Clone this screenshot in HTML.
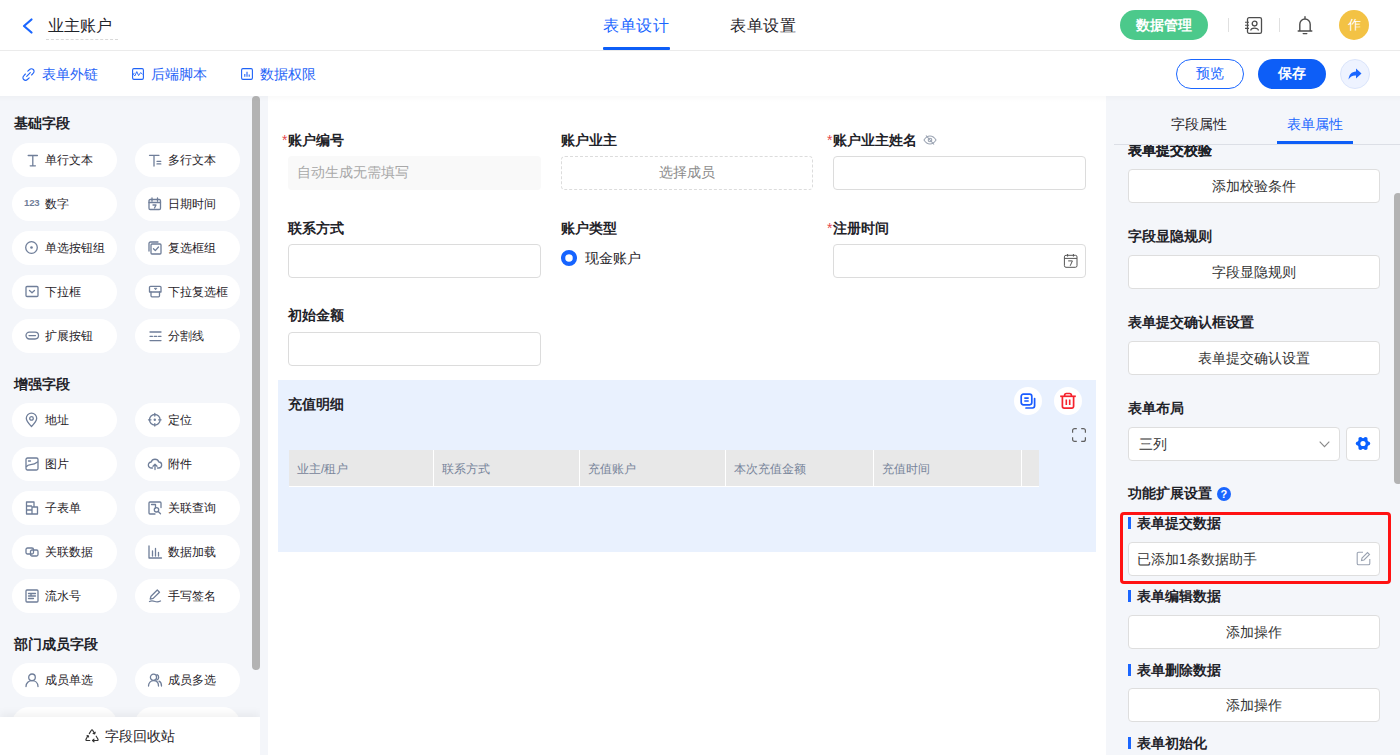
<!DOCTYPE html>
<html><head><meta charset="utf-8">
<style>
*{box-sizing:border-box;margin:0;padding:0}
html,body{width:1400px;height:755px;overflow:hidden;background:#fff;font-family:"Liberation Sans",sans-serif;color:#1f2329}
.a{position:absolute}
.t{position:absolute;white-space:nowrap;line-height:1}
svg{position:absolute;overflow:visible}
/* header */
#hdr{position:absolute;left:0;top:0;width:1400px;height:51px;background:#fff;border-bottom:1px solid #ebebeb}
#tb{position:absolute;left:0;top:51px;width:1400px;height:44px;background:#fff}
.link{color:#1f63f7;font-size:14px}
/* left */
#left{position:absolute;left:0;top:95px;width:260px;height:660px;background:#f4f6fa;overflow:hidden}
.sec{position:absolute;left:14px;font-size:14px;font-weight:bold;color:#1f2329;line-height:1}
.pill{position:absolute;width:105px;height:34px;border-radius:17px;background:#fff}
.pill span{position:absolute;left:33px;top:11px;font-size:12px;line-height:1;color:#1f2329;white-space:nowrap}
.pill svg{left:13px;top:10px}
#canvas{position:absolute;left:260px;top:95px;width:846px;height:660px;background:#f4f6fa}
#form{position:absolute;left:268px;top:95px;width:838px;height:660px;background:#fff}
#right{position:absolute;left:1106px;top:95px;width:294px;height:660px;background:#f4f6fa;overflow:hidden}
.shadow{position:absolute;left:0;top:96px;width:1400px;height:6px;background:linear-gradient(rgba(0,0,0,0.025),rgba(0,0,0,0))}
.lbl{font-size:14px;font-weight:bold;color:#1f2329}
.inp{height:34px;border:1px solid #dcdcdc;border-radius:4px;background:#fff}
</style></head><body>
<div id="hdr">
  <svg style="left:22px;top:17.5px" width="11" height="16" viewBox="0 0 11 16"><path d="M9.5 1.5 L2 8 L9.5 14.5" fill="none" stroke="#1a66ff" stroke-width="2.2" stroke-linecap="round" stroke-linejoin="round"/></svg>
  <div class="t" style="left:48px;top:18px;font-size:16px;color:#1f2329">业主账户</div>
  <div class="a" style="left:46px;top:39px;width:72px;border-top:1px dashed #d9d9d9"></div>
  <div class="t" style="left:603px;top:18px;font-size:16px;letter-spacing:0.6px;color:#1a66ff">表单设计</div>
  <div class="a" style="left:603px;top:47px;width:67px;height:3px;background:#0d5ef7;border-radius:1px"></div>
  <div class="t" style="left:730px;top:18px;font-size:16px;letter-spacing:0.6px;color:#1f2329">表单设置</div>
  <div class="a" style="left:1120px;top:10px;width:88px;height:30px;border-radius:15px;background:#4cc98b"></div>
  <div class="t" style="left:1136px;top:18px;font-size:14px;color:#fff;font-weight:bold">数据管理</div>
  <div class="a" style="left:1228px;top:18px;width:1px;height:14px;background:#e0e0e0"></div>
  <div class="a" style="left:1279px;top:18px;width:1px;height:14px;background:#e0e0e0"></div>
  <svg style="left:1244px;top:16px" width="19" height="19" viewBox="0 0 19 19"><rect x="3.5" y="1.7" width="14" height="15.6" rx="1.6" fill="none" stroke="#4d4d4d" stroke-width="1.3"/><circle cx="10.6" cy="7.6" r="2.4" fill="none" stroke="#4d4d4d" stroke-width="1.3"/><path d="M6.8 14.6C6.8 11.2 14.4 11.2 14.4 14.6" fill="none" stroke="#4d4d4d" stroke-width="1.3"/><path d="M1 6.2h4M1 9.3h4M1 12.4h4" stroke="#4d4d4d" stroke-width="1.1"/></svg>
  <svg style="left:1297px;top:16px" width="16" height="19" viewBox="0 0 16 19"><path d="M8 0.8v1.6M2.8 14.8V8.2a5.2 5.2 0 0 1 10.4 0v6.6M1.2 15h13.6M6.2 17.6h3.6" fill="none" stroke="#4d4d4d" stroke-width="1.4" stroke-linecap="round"/></svg>
  <div class="a" style="left:1339px;top:10px;width:30px;height:30px;border-radius:15px;background:#f3c244"></div>
  <div class="t" style="left:1348px;top:19px;font-size:12.5px;color:#fff">作</div>
</div>
<div id="tb">
  <svg style="left:22px;top:17px" width="13" height="13" viewBox="0 0 13 13"><path d="M5.8 3.2L7.6 1.5a2.6 2.6 0 0 1 3.7 3.7L9.6 7M7.2 9.8L5.4 11.5a2.6 2.6 0 0 1 -3.7 -3.7L3.4 6M4.7 8.3L8.3 4.7" fill="none" stroke="#1f63f7" stroke-width="1.1" stroke-linecap="round"/></svg>
  <div class="t link" style="left:42px;top:16px">表单外链</div>
  <svg style="left:132px;top:17px" width="12" height="12" viewBox="0 0 12 12"><rect x="0.6" y="0.6" width="10.8" height="10.8" rx="1.3" fill="none" stroke="#1f63f7" stroke-width="1.1"/><path d="M2.6 4.8L1.2 6.3L2.9 7.9L4.8 3.6L6.6 7.6L8.6 4.6L10.6 6.3" fill="none" stroke="#1f63f7" stroke-width="0.9" stroke-linejoin="round"/></svg>
  <div class="t link" style="left:151px;top:16px">后端脚本</div>
  <svg style="left:241px;top:17px" width="12" height="12" viewBox="0 0 12 12"><rect x="0.6" y="0.6" width="10.8" height="10.8" rx="1.3" fill="none" stroke="#1f63f7" stroke-width="1.1"/><path d="M3.8 8.8V6M6 8.8V3.8M8.2 8.8V6.5" fill="none" stroke="#1f63f7" stroke-width="1.1"/></svg>
  <div class="t link" style="left:260px;top:16px">数据权限</div>
  <div class="a" style="left:1176px;top:8px;width:68px;height:30px;border-radius:15px;border:1px solid #1a66ff;background:#fff"></div>
  <div class="t" style="left:1196px;top:15px;font-size:14px;color:#1a66ff">预览</div>
  <div class="a" style="left:1258px;top:8px;width:68px;height:30px;border-radius:15px;background:#0d5ef7"></div>
  <div class="t" style="left:1278px;top:15px;font-size:14px;color:#fff;font-weight:bold">保存</div>
  <div class="a" style="left:1340px;top:8px;width:30px;height:30px;border-radius:15px;background:#eef3ff;border:1px solid #dbe5fb"></div>
  <svg style="left:1347px;top:15px" width="16" height="16" viewBox="0 0 16 16"><path d="M9 2.5 L14.5 7.5 L9 12.5 V9.5 C5.5 9.3 3.3 10.5 1.5 13.5 C2 8.5 4.5 5.8 9 5.5 Z" fill="#1a66ff"/></svg>
</div>
<div id="canvas"></div>
<div id="form"></div>
<div class="t" style="left:282px;top:133px;font-size:14px;color:#e5484d">*</div><div class="t lbl" style="left:288px;top:133px">账户编号</div>
<div class="a" style="left:288px;top:156px;width:253px;height:34px;border-radius:4px;background:#f9f9f9"></div>
<div class="t" style="left:297px;top:165px;font-size:14px;color:#a8a8a8">自动生成无需填写</div>
<div class="t lbl" style="left:561px;top:133px">账户业主</div>
<div class="a" style="left:561px;top:156px;width:252px;height:34px;border-radius:4px;border:1px dashed #dcdcdc;background:#fff"></div>
<div class="t" style="left:659px;top:165px;font-size:14px;color:#8c8c8c">选择成员</div>
<div class="t" style="left:827px;top:133px;font-size:14px;color:#e5484d">*</div><div class="t lbl" style="left:833px;top:133px">账户业主姓名</div>
<svg style="left:923px;top:134px" width="14" height="12" viewBox="0 0 14 12"><path d="M1 6c1.6-2.6 3.6-4 6-4s4.4 1.4 6 4c-1.6 2.6-3.6 4-6 4S2.6 8.6 1 6z" fill="none" stroke="#9aa3b2" stroke-width="1.1"/><circle cx="7" cy="6" r="1.8" fill="none" stroke="#9aa3b2" stroke-width="1.1"/><path d="M3 1.5l8 9" stroke="#9aa3b2" stroke-width="1.1"/></svg>
<div class="a inp" style="left:833px;top:156px;width:253px"></div>
<div class="t lbl" style="left:288px;top:221px">联系方式</div>
<div class="a inp" style="left:288px;top:244px;width:253px"></div>
<div class="t lbl" style="left:561px;top:221px">账户类型</div>
<svg style="left:561px;top:250px" width="16" height="16" viewBox="0 0 16 16"><circle cx="8" cy="8" r="5.9" fill="#fff" stroke="#1664ff" stroke-width="4.3"/></svg>
<div class="t" style="left:585px;top:251px;font-size:14px;color:#1f2329">现金账户</div>
<div class="t" style="left:827px;top:221px;font-size:14px;color:#e5484d">*</div><div class="t lbl" style="left:833px;top:221px">注册时间</div>
<div class="a inp" style="left:833px;top:244px;width:253px"></div>
<svg style="left:1063px;top:253px" width="15" height="15" viewBox="0 0 15 15"><rect x="1.4" y="2.3" width="12.6" height="12" rx="1.6" fill="none" stroke="#555" stroke-width="1"/><path d="M1.4 5.4h12.6M4.6 1v2.6M10.4 1v2.6M5.2 7.9h4.2L7.2 12.8" fill="none" stroke="#555" stroke-width="1"/></svg>
<div class="t lbl" style="left:288px;top:308px">初始金额</div>
<div class="a inp" style="left:288px;top:332px;width:253px"></div>
<div class="a" style="left:278px;top:380px;width:818px;height:172px;background:#e9f1fe"></div>
<div class="t lbl" style="left:288px;top:397px">充值明细</div>
<div class="a" style="left:1014px;top:387px;width:28px;height:28px;border-radius:14px;background:#fff"></div>
<svg style="left:1019px;top:392px" width="18" height="18" viewBox="0 0 18 18"><rect x="2.2" y="2.2" width="10.6" height="10.6" rx="2.2" fill="none" stroke="#1a5cff" stroke-width="1.7"/><path d="M5.3 6.2h4.4M5.3 9h4.4" stroke="#1a5cff" stroke-width="1.7"/><path d="M15.6 6.5v7.3a2.2 2.2 0 0 1-2.2 2.2H7" fill="none" stroke="#1a5cff" stroke-width="1.7" stroke-linecap="round"/></svg>
<div class="a" style="left:1054px;top:387px;width:28px;height:28px;border-radius:14px;background:#fff"></div>
<svg style="left:1059px;top:392px" width="18" height="18" viewBox="0 0 18 18"><path d="M1.2 4.3h15.6" stroke="#f5222d" stroke-width="1.7"/><path d="M5.6 4.3V3.3a1.8 1.8 0 0 1 1.8-1.8h3.2a1.8 1.8 0 0 1 1.8 1.8v1" fill="none" stroke="#f5222d" stroke-width="1.7"/><path d="M3.4 4.3v10a1.8 1.8 0 0 0 1.8 1.8h7.6a1.8 1.8 0 0 0 1.8-1.8v-10" fill="none" stroke="#f5222d" stroke-width="1.7"/><path d="M7.3 7.5v5.5M10.7 7.5v5.5" stroke="#f5222d" stroke-width="1.6"/></svg>
<svg style="left:1072px;top:428px" width="14" height="14" viewBox="0 0 14 14"><path d="M0.6 4.8V2.6a2 2 0 0 1 2-2h2.2M9.2 0.6h2.2a2 2 0 0 1 2 2v2.2M13.4 9.2v2.2a2 2 0 0 1-2 2H9.2M4.8 13.4H2.6a2 2 0 0 1-2-2V9.2" fill="none" stroke="#606060" stroke-width="1.2"/></svg>
<div class="a" style="left:289px;top:450px;width:750px;height:37px;background:#fff"></div>
<div class="a" style="left:289px;top:450px;width:144px;height:36px;background:#e8e8e8"></div>
<div class="t" style="left:297px;top:463px;font-size:12px;color:#77849a">业主/租户</div>
<div class="a" style="left:434px;top:450px;width:145px;height:36px;background:#e8e8e8"></div>
<div class="t" style="left:442px;top:463px;font-size:12px;color:#77849a">联系方式</div>
<div class="a" style="left:580px;top:450px;width:145px;height:36px;background:#e8e8e8"></div>
<div class="t" style="left:588px;top:463px;font-size:12px;color:#77849a">充值账户</div>
<div class="a" style="left:726px;top:450px;width:147px;height:36px;background:#e8e8e8"></div>
<div class="t" style="left:734px;top:463px;font-size:12px;color:#77849a">本次充值金额</div>
<div class="a" style="left:874px;top:450px;width:147px;height:36px;background:#e8e8e8"></div>
<div class="t" style="left:882px;top:463px;font-size:12px;color:#77849a">充值时间</div>
<div class="a" style="left:1022px;top:450px;width:17px;height:36px;background:#e8e8e8"></div>
<div id="left">
<div class="sec" style="top:21px">基础字段</div>
<div class="pill" style="left:12px;top:48px"><svg width="14" height="14" viewBox="0 0 14 14"><path d="M3.2 2.5h9.2M5.2 12.8h5.2M7.8 2.5v10.3" fill="none" stroke="#6f7e99" stroke-width="1.3" stroke-linecap="round" stroke-linejoin="round"/></svg><span>单行文本</span></div>
<div class="pill" style="left:135px;top:48px"><svg width="14" height="14" viewBox="0 0 14 14"><path d="M1.5 2.3h9.5M6 2.3v10.8M9 8.3h3.8M9 10.9h3.8" fill="none" stroke="#6f7e99" stroke-width="1.3" stroke-linecap="round" stroke-linejoin="round"/></svg><span>多行文本</span></div>
<div class="pill" style="left:12px;top:92px"><svg width="14" height="14" viewBox="0 0 14 14"><text x="-1" y="9" font-family="Liberation Sans" font-weight="bold" font-size="9.6" letter-spacing="-0.2" fill="#6f7e99">123</text></svg><span>数字</span></div>
<div class="pill" style="left:135px;top:92px"><svg width="14" height="14" viewBox="0 0 14 14"><rect x="1" y="2.5" width="11.5" height="10" rx="1.2" fill="none" stroke="#6f7e99" stroke-width="1.3" stroke-linecap="round" stroke-linejoin="round"/><path d="M1 5.5h11.5M4 1v3M9.5 1v3M5 8h3l-1.5 3" fill="none" stroke="#6f7e99" stroke-width="1.3" stroke-linecap="round" stroke-linejoin="round"/></svg><span>日期时间</span></div>
<div class="pill" style="left:12px;top:136px"><svg width="14" height="14" viewBox="0 0 14 14"><circle cx="6.5" cy="6.5" r="5.8" fill="none" stroke="#6f7e99" stroke-width="1.3" stroke-linecap="round" stroke-linejoin="round"/><circle cx="6.5" cy="6.5" r="1.3" fill="#6f7e99"/></svg><span>单选按钮组</span></div>
<div class="pill" style="left:135px;top:136px"><svg width="14" height="14" viewBox="0 0 14 14"><path d="M1 10V2.5a1.5 1.5 0 0 1 1.5-1.5H10" fill="none" stroke="#6f7e99" stroke-width="1.3" stroke-linecap="round" stroke-linejoin="round"/><rect x="3" y="3" width="10" height="10" rx="1" fill="none" stroke="#6f7e99" stroke-width="1.3" stroke-linecap="round" stroke-linejoin="round"/><path d="M5.5 7.8l1.8 1.8 3.2-3.6" fill="none" stroke="#6f7e99" stroke-width="1.3" stroke-linecap="round" stroke-linejoin="round"/></svg><span>复选框组</span></div>
<div class="pill" style="left:12px;top:180px"><svg width="14" height="14" viewBox="0 0 14 14"><rect x="1" y="1.5" width="12" height="10" rx="1" fill="none" stroke="#6f7e99" stroke-width="1.3" stroke-linecap="round" stroke-linejoin="round"/><path d="M4.5 5.5l2.5 2.3 2.5-2.3" fill="none" stroke="#6f7e99" stroke-width="1.3" stroke-linecap="round" stroke-linejoin="round"/></svg><span>下拉框</span></div>
<div class="pill" style="left:135px;top:180px"><svg width="14" height="14" viewBox="0 0 14 14"><path d="M2.5 1.3h9.5a1 1 0 0 1 1 1V7H1.5V2.3a1 1 0 0 1 1-1z" fill="none" stroke="#6f7e99" stroke-width="1.3" stroke-linecap="round" stroke-linejoin="round"/><path d="M3 7v3.8a1 1 0 0 0 1 1h6.5a1 1 0 0 0 1-1V7" fill="none" stroke="#6f7e99" stroke-width="1.3" stroke-linecap="round" stroke-linejoin="round"/><path d="M6.3 3.3h2.6L7.6 4.8z" fill="#6f7e99" stroke="#6f7e99" stroke-width="0.8" stroke-linejoin="round"/></svg><span>下拉复选框</span></div>
<div class="pill" style="left:12px;top:224px"><svg width="14" height="14" viewBox="0 0 14 14"><rect x="1" y="3.2" width="12.5" height="6.8" rx="3.4" fill="none" stroke="#6f7e99" stroke-width="1.3" stroke-linecap="round" stroke-linejoin="round"/><path d="M4 6.6h6.5" fill="none" stroke="#6f7e99" stroke-width="1.3" stroke-linecap="round" stroke-linejoin="round"/></svg><span>扩展按钮</span></div>
<div class="pill" style="left:135px;top:224px"><svg width="14" height="14" viewBox="0 0 14 14"><path d="M2 3h11M2 7.3h2.5M6.2 7.3h2.6M10.5 7.3h2.5M2 11.6h11" fill="none" stroke="#6f7e99" stroke-width="1.3" stroke-linecap="round" stroke-linejoin="round"/></svg><span>分割线</span></div>
<div class="sec" style="top:282px">增强字段</div>
<div class="pill" style="left:12px;top:308px"><svg width="14" height="14" viewBox="0 0 14 14"><path d="M6.5 13.5C3 10 1.3 7.5 1.3 5.3a5.2 5.2 0 0 1 10.4 0c0 2.2-1.7 4.7-5.2 8.2z" fill="none" stroke="#6f7e99" stroke-width="1.3" stroke-linecap="round" stroke-linejoin="round"/><circle cx="6.5" cy="5.4" r="1.8" fill="none" stroke="#6f7e99" stroke-width="1.3" stroke-linecap="round" stroke-linejoin="round"/></svg><span>地址</span></div>
<div class="pill" style="left:135px;top:308px"><svg width="14" height="14" viewBox="0 0 14 14"><circle cx="6.8" cy="6.8" r="5.3" fill="none" stroke="#6f7e99" stroke-width="1.3" stroke-linecap="round" stroke-linejoin="round"/><circle cx="6.8" cy="6.8" r="1.2" fill="#6f7e99"/><path d="M6.8 0.5v2.5M6.8 10.6v2.5M0.5 6.8h2.5M10.6 6.8h2.5" fill="none" stroke="#6f7e99" stroke-width="1.3" stroke-linecap="round" stroke-linejoin="round"/></svg><span>定位</span></div>
<div class="pill" style="left:12px;top:352px"><svg width="14" height="14" viewBox="0 0 14 14"><rect x="1" y="1" width="12" height="12" rx="1.5" fill="none" stroke="#6f7e99" stroke-width="1.3" stroke-linecap="round" stroke-linejoin="round"/><path d="M1.5 9.5C4 6 7 9.5 12.5 5M3.5 4h2" fill="none" stroke="#6f7e99" stroke-width="1.3" stroke-linecap="round" stroke-linejoin="round"/></svg><span>图片</span></div>
<div class="pill" style="left:135px;top:352px"><svg width="14" height="14" viewBox="0 0 14 14"><path d="M4.5 11H3.5a3 3 0 0 1-.3-6 4 4 0 0 1 7.6 0 3 3 0 0 1-.3 6H9.5" fill="none" stroke="#6f7e99" stroke-width="1.3" stroke-linecap="round" stroke-linejoin="round"/><path d="M7 12.5V7.5M5 9.3l2-2 2 2" fill="none" stroke="#6f7e99" stroke-width="1.3" stroke-linecap="round" stroke-linejoin="round"/></svg><span>附件</span></div>
<div class="pill" style="left:12px;top:396px"><svg width="14" height="14" viewBox="0 0 14 14"><path d="M7 13H1.5V1h7.5v4.5M1.5 5h5M1.5 9h5M7 6h5.5v7H7z" fill="none" stroke="#6f7e99" stroke-width="1.3" stroke-linecap="round" stroke-linejoin="round"/></svg><span>子表单</span></div>
<div class="pill" style="left:135px;top:396px"><svg width="14" height="14" viewBox="0 0 14 14"><path d="M7 13H2a1 1 0 0 1-1-1V2a1 1 0 0 1 1-1h10a1 1 0 0 1 1 1v4.5" fill="none" stroke="#6f7e99" stroke-width="1.3" stroke-linecap="round" stroke-linejoin="round"/><path d="M3.5 3.5h4v3.5" fill="none" stroke="#6f7e99" stroke-width="1.3" stroke-linecap="round" stroke-linejoin="round"/><circle cx="8.5" cy="8.8" r="2.2" fill="none" stroke="#6f7e99" stroke-width="1.3" stroke-linecap="round" stroke-linejoin="round"/><path d="M10.2 10.5l2.3 2.3" fill="none" stroke="#6f7e99" stroke-width="1.3" stroke-linecap="round" stroke-linejoin="round"/></svg><span>关联查询</span></div>
<div class="pill" style="left:12px;top:440px"><svg width="14" height="14" viewBox="0 0 14 14"><rect x="1" y="3" width="7.5" height="6" rx="1.5" fill="none" stroke="#6f7e99" stroke-width="1.3" stroke-linecap="round" stroke-linejoin="round"/><rect x="5.5" y="5" width="7.5" height="6" rx="1.5" fill="none" stroke="#6f7e99" stroke-width="1.3" stroke-linecap="round" stroke-linejoin="round"/></svg><span>关联数据</span></div>
<div class="pill" style="left:135px;top:440px"><svg width="14" height="14" viewBox="0 0 14 14"><path d="M1 1v12h12.5M4.5 11V6M7.5 11V3.5M10.5 11V7.5" fill="none" stroke="#6f7e99" stroke-width="1.3" stroke-linecap="round" stroke-linejoin="round"/></svg><span>数据加载</span></div>
<div class="pill" style="left:12px;top:484px"><svg width="14" height="14" viewBox="0 0 14 14"><rect x="1" y="1" width="12" height="12" rx="1" fill="none" stroke="#6f7e99" stroke-width="1.3" stroke-linecap="round" stroke-linejoin="round"/><path d="M3.5 4.5h7M3.5 7h7M3.5 9.5h5M6 4.5v2.5" fill="none" stroke="#6f7e99" stroke-width="1.3" stroke-linecap="round" stroke-linejoin="round"/></svg><span>流水号</span></div>
<div class="pill" style="left:135px;top:484px"><svg width="14" height="14" viewBox="0 0 14 14"><path d="M1.5 12.5c2-1 4-.5 5.5 0s3.5.5 5.5-.5M2.2 10.2l.8-3 6.3-6.2 2.2 2.2-6.3 6.2z" fill="none" stroke="#6f7e99" stroke-width="1.3" stroke-linecap="round" stroke-linejoin="round"/></svg><span>手写签名</span></div>
<div class="sec" style="top:542px">部门成员字段</div>
<div class="pill" style="left:12px;top:568px"><svg width="14" height="14" viewBox="0 0 14 14"><circle cx="7" cy="4.3" r="3.3" fill="none" stroke="#6f7e99" stroke-width="1.3" stroke-linecap="round" stroke-linejoin="round"/><path d="M1 13.5c0-3.5 2.7-5.8 6-5.8s6 2.3 6 5.8" fill="none" stroke="#6f7e99" stroke-width="1.3" stroke-linecap="round" stroke-linejoin="round"/></svg><span>成员单选</span></div>
<div class="pill" style="left:135px;top:568px"><svg width="14" height="14" viewBox="0 0 14 14"><circle cx="5.5" cy="4.3" r="3.1" fill="none" stroke="#6f7e99" stroke-width="1.3" stroke-linecap="round" stroke-linejoin="round"/><path d="M0.5 13c0-3.3 2.2-5.3 5-5.3s5 2 5 5.3M9 1.6a3 3 0 0 1 0 5.4M11 8.2c1.6.8 2.5 2.5 2.5 4.8" fill="none" stroke="#6f7e99" stroke-width="1.3" stroke-linecap="round" stroke-linejoin="round"/></svg><span>成员多选</span></div>
<div class="pill" style="left:12px;top:612px"><svg width="14" height="14" viewBox="0 0 14 14"></svg><span></span></div>
<div class="pill" style="left:135px;top:612px"><svg width="14" height="14" viewBox="0 0 14 14"></svg><span></span></div>
<div class="a" style="left:252px;top:1px;width:8px;height:574px;border-radius:4px;background:#b3b3b3"></div>
<div class="a" style="left:0;top:622px;width:260px;height:38px;background:#fff;box-shadow:0 -4px 8px rgba(0,0,0,0.05)"></div>
<svg style="left:85px;top:634px" width="14" height="13" viewBox="0 0 14 13"><path d="M4.3 4.6L6.2 1.5Q7 0.3 7.8 1.5L9.6 4.6M8.1 4.5L9.7 4.9L10.2 3.2M3 6.8L1.1 10Q0.4 11.5 2 11.5H4.8M2 6.9L3.1 6.5L3.6 8M7.6 11.5H12Q13.6 11.5 12.9 10L11.2 7.2M9 10.1L7.5 11.5L9 12.8" fill="none" stroke="#333" stroke-width="1.15" stroke-linecap="round" stroke-linejoin="round"/></svg>
<div class="t" style="left:105px;top:634px;font-size:14px;color:#1f2329">字段回收站</div>
</div>
<div id="right">
<div class="t" style="left:22px;top:48px;font-size:14px;font-weight:bold;color:#1f2329">表单提交校验</div>
<div class="a" style="left:22px;top:74px;width:252px;height:34px;background:#fff;border:1px solid #dedede;border-radius:4px"></div>
<div class="t" style="left:106px;top:84px;font-size:14px;color:#333">添加校验条件</div>
<div class="t" style="left:22px;top:134px;font-size:14px;font-weight:bold;color:#1f2329">字段显隐规则</div>
<div class="a" style="left:22px;top:160px;width:252px;height:34px;background:#fff;border:1px solid #dedede;border-radius:4px"></div>
<div class="t" style="left:106px;top:170px;font-size:14px;color:#333">字段显隐规则</div>
<div class="t" style="left:22px;top:220px;font-size:14px;font-weight:bold;color:#1f2329">表单提交确认框设置</div>
<div class="a" style="left:22px;top:246px;width:252px;height:34px;background:#fff;border:1px solid #dedede;border-radius:4px"></div>
<div class="t" style="left:92px;top:256px;font-size:14px;color:#333">表单提交确认设置</div>
<div class="t" style="left:22px;top:306px;font-size:14px;font-weight:bold;color:#1f2329">表单布局</div>
<div class="a" style="left:22px;top:332px;width:212px;height:34px;background:#fff;border:1px solid #dedede;border-radius:4px"></div>
<div class="t" style="left:33px;top:342px;font-size:14px;color:#333">三列</div>
<svg style="left:213px;top:346px" width="11" height="7" viewBox="0 0 11 7"><path d="M0.7 0.7l4.8 5 4.8-5" fill="none" stroke="#888" stroke-width="1.1"/></svg>
<div class="a" style="left:240px;top:332px;width:34px;height:34px;background:#fff;border:1px solid #dedede;border-radius:4px"></div>
<svg style="left:249px;top:342px" width="16" height="13" viewBox="0 0 16 13"><g fill="#0a60ff"><circle cx="13.10" cy="6.50" r="2.1"/><circle cx="10.55" cy="10.92" r="2.1"/><circle cx="5.45" cy="10.92" r="2.1"/><circle cx="2.90" cy="6.50" r="2.1"/><circle cx="5.45" cy="2.08" r="2.1"/><circle cx="10.55" cy="2.08" r="2.1"/><circle cx="8" cy="6.5" r="5.5"/></g><circle cx="8" cy="6.5" r="2.6" fill="#fff"/></svg>
<div class="t" style="left:22px;top:391px;font-size:14px;font-weight:bold;color:#1f2329">功能扩展设置</div>
<div class="a" style="left:111px;top:392px;width:14px;height:14px;border-radius:7px;background:#1a66ff"></div>
<div class="t" style="left:114.5px;top:393.5px;font-size:11px;font-weight:bold;color:#fff">?</div>
<div class="a" style="left:14px;top:417px;width:271px;height:72px;border:3px solid #ff1212;border-radius:4px"></div>
<div class="a" style="left:22px;top:422px;width:3px;height:12px;background:#1a66ff"></div><div class="t" style="left:31px;top:421px;font-size:14px;font-weight:bold;color:#1f2329">表单提交数据</div>
<div class="a" style="left:22px;top:447px;width:252px;height:34px;background:#fff;border:1px solid #dedede;border-radius:4px"></div>
<div class="t" style="left:31px;top:457px;font-size:14px;color:#333">已添加1条数据助手</div>
<svg style="left:250px;top:456px" width="15" height="15" viewBox="0 0 15 15"><path d="M7 1.2H2.5A1.3 1.3 0 0 0 1.2 2.5v10A1.3 1.3 0 0 0 2.5 13.8h10a1.3 1.3 0 0 0 1.3-1.3V8" fill="none" stroke="#9aa3b2" stroke-width="1.1"/><path d="M5.5 9.5l.5-2.5 5.5-5.5 2 2-5.5 5.5z" fill="none" stroke="#9aa3b2" stroke-width="1.1"/></svg>
<div class="a" style="left:22px;top:495px;width:3px;height:12px;background:#1a66ff"></div><div class="t" style="left:31px;top:494px;font-size:14px;font-weight:bold;color:#1f2329">表单编辑数据</div>
<div class="a" style="left:22px;top:520px;width:252px;height:34px;background:#fff;border:1px solid #dedede;border-radius:4px"></div>
<div class="t" style="left:120px;top:530px;font-size:14px;color:#333">添加操作</div>
<div class="a" style="left:22px;top:569px;width:3px;height:12px;background:#1a66ff"></div><div class="t" style="left:31px;top:568px;font-size:14px;font-weight:bold;color:#1f2329">表单删除数据</div>
<div class="a" style="left:22px;top:593px;width:252px;height:34px;background:#fff;border:1px solid #dedede;border-radius:4px"></div>
<div class="t" style="left:120px;top:603px;font-size:14px;color:#333">添加操作</div>
<div class="a" style="left:22px;top:642px;width:3px;height:12px;background:#1a66ff"></div><div class="t" style="left:31px;top:641px;font-size:14px;font-weight:bold;color:#1f2329">表单初始化</div>
<div class="a" style="left:0px;top:0px;width:294px;height:50px;background:#f4f6fa"></div>
<div class="a" style="left:8px;top:49px;width:286px;height:1px;background:#dcdfe6"></div>
<div class="t" style="left:65px;top:22px;font-size:14px;color:#1f2329">字段属性</div>
<div class="t" style="left:181px;top:22px;font-size:14px;color:#1a66ff">表单属性</div>
<div class="a" style="left:171px;top:46px;width:76px;height:3px;background:#0d5ef7"></div>
<div class="t" style="left:22px;top:48px;font-size:14px;font-weight:bold;color:#1f2329;clip-path:inset(3px 0 0 0)">表单提交校验</div>
<div class="a" style="left:288px;top:98px;width:8px;height:291px;background:#b3b3b3;border-radius:4px"></div>
</div>
<div class="a" style="left:0;top:95px;width:1400px;height:1px;background:#fff"></div>
<div class="shadow"></div>
</body></html>
